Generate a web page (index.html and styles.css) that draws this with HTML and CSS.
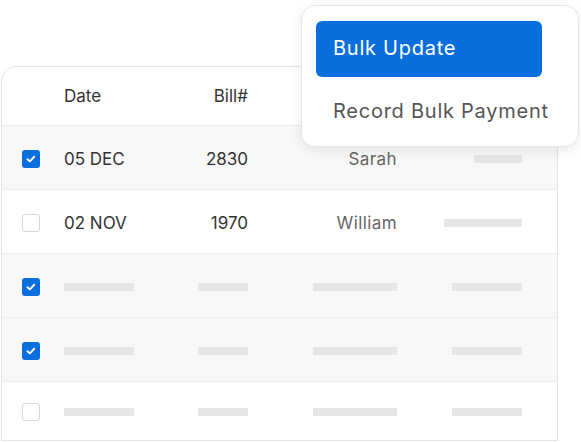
FILE: index.html
```html
<!DOCTYPE html>
<html lang="en">
<head>
  <meta charset="UTF-8">
  <meta name="viewport" content="width=device-width, initial-scale=1.0">
  <title>Bulk Actions</title>
  <link rel="stylesheet" href="styles.css">
</head>
<body>
  <div class="stage">
    <div class="table-card">
      <div class="row head">
        <span></span>
        <span class="cell">Date</span>
        <span class="cell num">Bill#</span>
        <span></span>
        <span></span>
      </div>
      <div class="row selected">
        <span class="check on"><svg viewBox="0 0 18 18"><path d="M5.5 9.2l2.3 2.2 4.4-4.6"/></svg></span>
        <span class="cell">05 DEC</span>
        <span class="cell num">2830</span>
        <span class="cell name">Sarah</span>
        <span class="cell bar-cell"><i class="bar short"></i></span>
      </div>
      <div class="row">
        <span class="check"></span>
        <span class="cell">02 NOV</span>
        <span class="cell num">1970</span>
        <span class="cell name">William</span>
        <span class="cell bar-cell"><i class="bar long"></i></span>
      </div>
      <div class="row selected">
        <span class="check on"><svg viewBox="0 0 18 18"><path d="M5.5 9.2l2.3 2.2 4.4-4.6"/></svg></span>
        <span class="cell"><i class="bar b1"></i></span>
        <span class="cell num"><i class="bar b2"></i></span>
        <span class="cell name"><i class="bar b3"></i></span>
        <span class="cell bar-cell"><i class="bar b4"></i></span>
      </div>
      <div class="row selected">
        <span class="check on"><svg viewBox="0 0 18 18"><path d="M5.5 9.2l2.3 2.2 4.4-4.6"/></svg></span>
        <span class="cell"><i class="bar b1"></i></span>
        <span class="cell num"><i class="bar b2"></i></span>
        <span class="cell name"><i class="bar b3"></i></span>
        <span class="cell bar-cell"><i class="bar b4"></i></span>
      </div>
      <div class="row last">
        <span class="check"></span>
        <span class="cell"><i class="bar b1"></i></span>
        <span class="cell num"><i class="bar b2"></i></span>
        <span class="cell name"><i class="bar b3"></i></span>
        <span class="cell bar-cell"><i class="bar b4"></i></span>
      </div>
    </div>

    <div class="menu">
      <div class="menu-item active">Bulk Update</div>
      <div class="menu-item">Record Bulk Payment</div>
    </div>
  </div>
</body>
</html>
```

FILE: styles.css
```css
/* Basic resets */
* {
  margin: 0;
  padding: 0;
  box-sizing: border-box;
  font-family: Inter, "Noto Sans", sans-serif;
}
body, html {
  height: 100%;
  background: #fff;
  overflow: hidden;
}
.stage {
  position: relative;
  padding: 66px 0 0 1px;
}
/* Table card */
.table-card {
  width: 557px;
  height: 375px;
  border: 1px solid #e4e4e4;
  border-radius: 15px 15px 0 0;
  background: #fff;
  overflow: hidden;
}
.row {
  display: grid;
  grid-template-columns: 62px 134px 50px 150px 124px;
  align-items: center;
  height: 64px;
  padding-top: 2px;
  border-bottom: 1px solid #ededed;
  color: #333;
  font-size: 17px;
}
.row.head {
  height: 59px;
  padding-top: 0;
  border-bottom-color: #eaeaea;
  color: #333;
}
.row.last {
  height: 58px;
  border-bottom: none;
}
.row.selected {
  background: #f8f8f8;
}
.cell {
  display: flex;
  align-items: center;
}
.cell.num,
.cell.name,
.cell.bar-cell {
  justify-content: flex-end;
}
.cell.name {
  color: #666;
  letter-spacing: 0.4px;
  padding-right: 1px;
}
/* Checkboxes */
.check {
  width: 18px;
  height: 18px;
  margin-left: 20px;
  border: 1.5px solid #d6d6d6;
  border-radius: 3px;
  background: #fff;
}
.check.on {
  border: none;
  background: #0a6fdc;
}
.check svg {
  display: block;
  width: 18px;
  height: 18px;
  fill: none;
  stroke: #fff;
  stroke-width: 2;
  stroke-linecap: round;
  stroke-linejoin: round;
}
/* Placeholder bars */
.bar {
  display: block;
  height: 8px;
  background: #e6e6e6;
}
.bar.short { width: 48px; }
.bar.long { width: 78px; }
.bar.b1 { width: 70px; }
.bar.b2 { width: 50px; }
.bar.b3 { width: 84px; }
.bar.b4 { width: 70px; }
/* Dropdown menu */
.menu {
  position: absolute;
  top: 5px;
  left: 301px;
  width: 278px;
  height: 142px;
  padding: 15px 14px;
  background: #fff;
  border: 1px solid #e6e6e6;
  border-radius: 14px;
  box-shadow: 0 4px 14px rgba(0,0,0,0.08);
}
.menu-item {
  height: 56px;
  display: flex;
  align-items: center;
  padding-left: 17px;
  padding-bottom: 3px;
  font-size: 20px;
  color: #555;
  letter-spacing: 0.75px;
}
.menu-item.active {
  background: #0a6fdc;
  color: #fff;
  border-radius: 6px;
  width: 226px;
  margin-bottom: 7px;
}
```
